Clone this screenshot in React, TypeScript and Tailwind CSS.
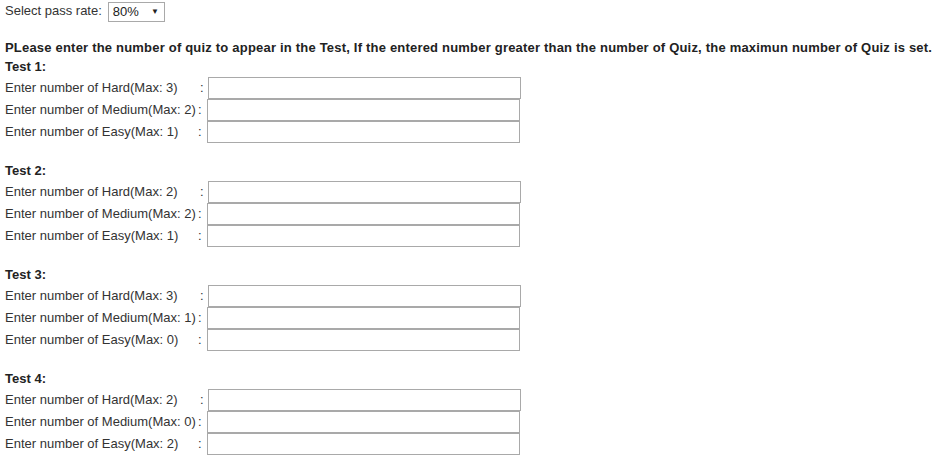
import React from "react";

type Test = { hard: number; medium: number; easy: number };

const tests: Test[] = [
  { hard: 3, medium: 2, easy: 1 },
  { hard: 2, medium: 2, easy: 1 },
  { hard: 3, medium: 1, easy: 0 },
  { hard: 2, medium: 0, easy: 2 },
];

const Row = ({ label, wide }: { label: string; wide?: boolean }) => (
  <div className="flex items-center h-[22px]">
    <span className="w-[193px] whitespace-nowrap">{label}</span>
    <span className={wide ? "w-[4px]" : "w-[6px] pl-[2px]"}>:</span>
    <input
      type="text"
      className={
        "h-[22px] w-[313px] border border-[#a9a9a9] bg-white outline-none " +
        (wide ? "ml-[5px]" : "ml-[4px]")
      }
    />
  </div>
);

const App = () => {
  return (
    <div
      className="pl-[5px] text-[13px] text-[#333] bg-white min-h-[464px]"
      style={{ fontFamily: '"Liberation Sans", Arial, sans-serif' }}
    >
      <div className="flex items-center h-[22px]">
        <span>Select pass rate:</span>
        <div className="ml-[6px] mt-[1px] flex items-center justify-between h-[20px] w-[57px] border border-[#a9a9a9] pl-[4px] pr-[5px] text-[#222]">
          <span>80%</span>
          <span className="text-[8px]">▼</span>
        </div>
      </div>

      <p className="mt-[19px] h-[14px] leading-[14px] font-bold text-[#222] whitespace-nowrap tracking-[0.2px]">
        PLease enter the number of quiz to appear in the Test, If the entered
        number greater than the number of Quiz, the maximun number of Quiz is
        set.
      </p>

      <div className="mt-[5px]">
        {tests.map((t, i) => (
          <div key={i} className={i > 0 ? "mt-[21px]" : ""}>
            <div className="h-[14px] leading-[14px] font-bold text-[#222]">
              Test {i + 1}:
            </div>
            <div className="mt-[3px]">
              <Row label={`Enter number of Hard(Max: ${t.hard})`} />
              <Row label={`Enter number of Medium(Max: ${t.medium})`} wide />
              <Row label={`Enter number of Easy(Max: ${t.easy})`} wide />
            </div>
          </div>
        ))}
      </div>
    </div>
  );
};

export default App;
